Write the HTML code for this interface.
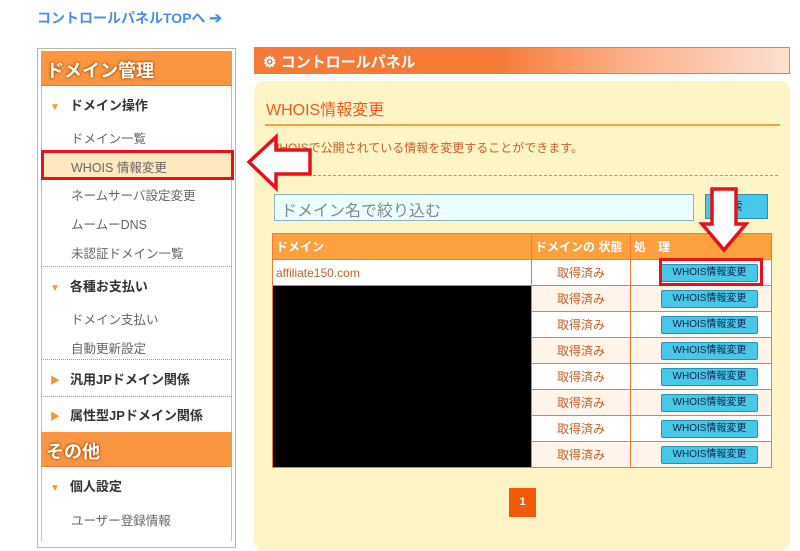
<!DOCTYPE html>
<html><head><meta charset="utf-8"><style>
*{margin:0;padding:0;box-sizing:border-box}
body{width:800px;height:537px;overflow:hidden;background:#fff;font-family:"Liberation Sans","Noto Sans CJK JP",sans-serif;position:relative}
.a{position:absolute}
.top{left:37px;top:8px;color:#4a8ef0;font-size:14px;font-weight:bold}
.side{left:37px;top:48px;width:199px;height:500px;border:1px solid #c8b49a;}
.sidein{left:41px;top:51px;width:191px;height:490px;border-left:1px solid #d0c0a8;border-right:1px solid #d0c0a8}
.hd{left:41px;width:191px;height:35px;background:#fa9642;color:#fff;font-size:18px;font-weight:bold;padding:6px 5px;text-shadow:0 0 3px #b04a00,0 0 2px #b04a00;border-bottom:1px solid #e0803a}
.cat{left:50px;font-size:13px;font-weight:bold;color:#333}
.cat i{font-style:normal;color:#f59a30;font-size:10px;margin-right:10px}
.it{left:71px;font-size:12.5px;color:#666}
.dot{left:41px;width:191px;border-top:1px dotted #999}
.bar{left:254px;top:47px;width:536px;height:27px;background:linear-gradient(90deg,#f57a38 0,#f57a38 45%,#fbb08a 70%,#fde0d0 100%);border:1px solid #f57a38;color:#fff;font-weight:bold;font-size:15px;padding:3px 8px}
.panel{left:254px;top:81px;width:536px;height:470px;background:#fef4c6;border-radius:10px}
.ttl{left:266px;top:96px;color:#f25a1c;font-size:16px}
table{position:absolute;left:272px;top:233px;border-collapse:collapse;font-size:12px}
td,th{border:1px solid #f27a3a;height:26px}
th{background:#fca040;color:#fff;text-align:left;padding-left:3px;font-size:12px}
td{color:#c8602a}
td.b{text-align:left;padding-left:30px}
.btn{display:inline-block;width:97px;height:18px;background:#48c8e8;border:1px solid #2a90b0;border-radius:2px;font-size:10px;color:#124;text-align:center;line-height:16px;vertical-align:middle}
</style></head><body>
<div class="a top">コントロールパネルTOPへ <span style="font-size:15px">➔</span></div>
<div class="a side"></div><div class="a sidein"></div>
<div class="a hd" style="top:51px">ドメイン管理</div>
<div class="a cat" style="top:95px"><i>▼</i>ドメイン操作</div>
<div class="a it" style="top:128px">ドメイン一覧</div>
<div class="a" style="left:41px;top:150px;width:193px;height:30px;background:#fde8c0;border:3px solid #e8101c"></div>
<div class="a it" style="top:157px">WHOIS 情報変更</div>
<div class="a it" style="top:185px">ネームサーバ設定変更</div>
<div class="a it" style="top:214px">ムームーDNS</div>
<div class="a it" style="top:243px">未認証ドメイン一覧</div>
<div class="a dot" style="top:266px"></div>
<div class="a cat" style="top:276px"><i>▼</i>各種お支払い</div>
<div class="a it" style="top:309px">ドメイン支払い</div>
<div class="a it" style="top:338px">自動更新設定</div>
<div class="a dot" style="top:359px"></div>
<div class="a cat" style="top:369px"><i>▶</i>汎用JPドメイン関係</div>
<div class="a dot" style="top:396px"></div>
<div class="a cat" style="top:405px"><i>▶</i>属性型JPドメイン関係</div>
<div class="a hd" style="top:432px">その他</div>
<div class="a cat" style="top:476px"><i>▼</i>個人設定</div>
<div class="a it" style="top:510px">ユーザー登録情報</div>

<div class="a bar">⚙ コントロールパネル</div>
<div class="a panel"></div>
<div class="a ttl">WHOIS情報変更</div>
<div class="a" style="left:265px;top:124px;width:515px;border-top:2px solid #fca040"></div>
<div class="a" style="left:268px;top:139px;font-size:12px;color:#c8602a">WHOISで公開されている情報を変更することができます。</div>
<div class="a" style="left:313px;top:175px;width:465px;border-top:1px dashed #999"></div>
<div class="a" style="left:274px;top:194px;width:420px;height:27px;background:#eaffff;border:1px solid #8ab0c8;font-size:16px;color:#888;padding:2px 6px">ドメイン名で絞り込む</div>
<div class="a" style="left:705px;top:194px;width:63px;height:25px;background:#48c8e8;border:1px solid #2a90b0;font-size:12px;text-align:center;line-height:23px;color:#124">索</div>
<table>
<tr><th style="width:259px">ドメイン</th><th style="width:99px">ドメインの 状態</th><th style="width:141px">処　理</th></tr>
<tr style="background:#fff"><td style="padding-left:3px">affiliate150.com</td><td align="center">取得済み</td><td class="b"><span class="btn">WHOIS情報変更</span></td></tr>
<tr style="background:#fef4ea"><td rowspan="7" style="background:#000"></td><td align="center">取得済み</td><td class="b"><span class="btn">WHOIS情報変更</span></td></tr>
<tr style="background:#fff"><td align="center">取得済み</td><td class="b"><span class="btn">WHOIS情報変更</span></td></tr>
<tr style="background:#fef4ea"><td align="center">取得済み</td><td class="b"><span class="btn">WHOIS情報変更</span></td></tr>
<tr style="background:#fff"><td align="center">取得済み</td><td class="b"><span class="btn">WHOIS情報変更</span></td></tr>
<tr style="background:#fef4ea"><td align="center">取得済み</td><td class="b"><span class="btn">WHOIS情報変更</span></td></tr>
<tr style="background:#fff"><td align="center">取得済み</td><td class="b"><span class="btn">WHOIS情報変更</span></td></tr>
<tr style="background:#fef4ea"><td align="center">取得済み</td><td class="b"><span class="btn">WHOIS情報変更</span></td></tr>
</table>
<div class="a" style="left:659px;top:258px;width:104px;height:28px;border:3px solid #e8101c"></div>
<div class="a" style="left:509px;top:488px;width:27px;height:29px;background:#f25a0a;color:#fff;font-size:11px;font-weight:bold;text-align:center;line-height:29px">1</div>
<svg class="a" style="left:0;top:0" width="800" height="537">
<path d="M249 162 L276 137 L276 150 L310 150 L310 174 L276 174 L276 188 Z" fill="#fff" stroke="#e8101c" stroke-width="3.5"/>
<path d="M712 189 L736 189 L736 224 L746 224 L724 250 L702 224 L712 224 Z" fill="#fff" stroke="#e8101c" stroke-width="3.5"/>
</svg>
</body></html>
